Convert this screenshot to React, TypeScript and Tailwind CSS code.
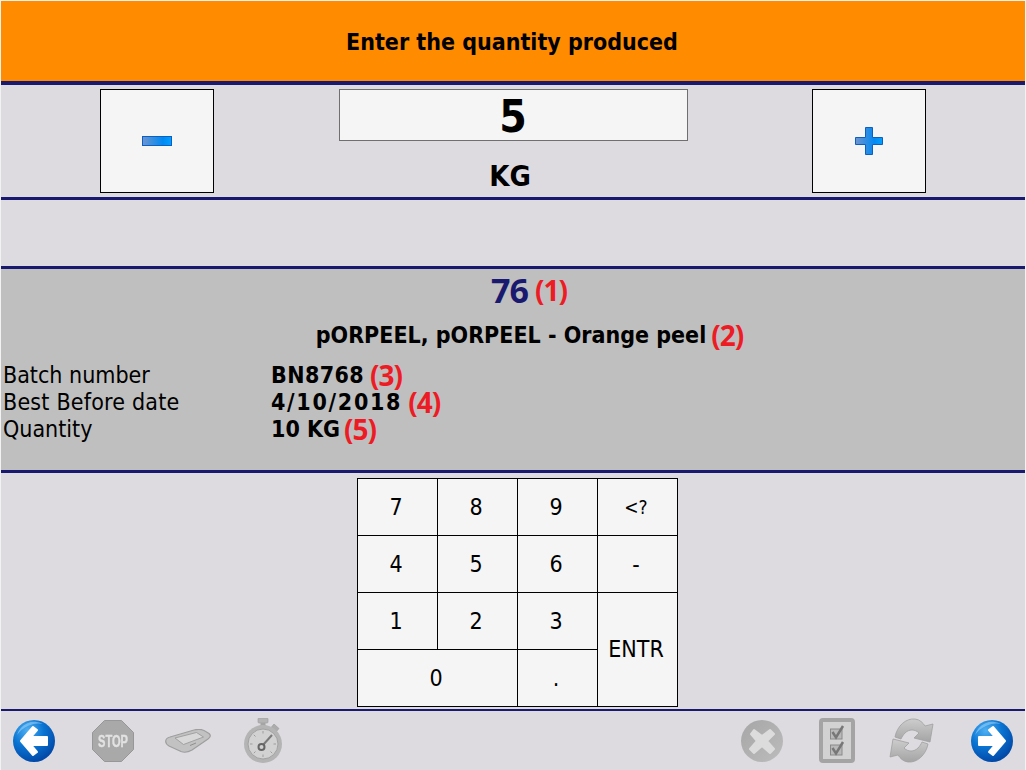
import type { ReactNode } from 'react';

const note = "font-['Open_Sans',sans-serif] font-bold text-[#ed1c24] text-[28px] tracking-[-1px] leading-[24px]";

function Mark({ n, className = 'ml-[6px]' }: { n: number; className?: string }) {
  return <span className={`${note} ${className}`}>({n})</span>;
}

function Key({ label, className = 'text-[23px]' }: { label: string; className?: string }) {
  return (
    <div className={`flex items-center justify-center bg-[#f5f5f5] pr-[2px] text-black ${className}`}>
      {label}
    </div>
  );
}

function InfoRow({ label, value, n, className = '', markClass = 'ml-[6px]', labelClass = '' }: { label: string; value: string; n: number; className?: string; markClass?: string; labelClass?: string }) {
  return (
    <div className="flex h-[27px] items-center">
      <div className={`w-[270px] pl-[2px] text-[23px] leading-[27px] ${labelClass}`}>{label}</div>
      <div className={`text-[23px] font-bold leading-[27px] ${className}`}>{value}</div>
      <Mark n={n} className={`-mt-[2px] ${markClass}`} />
    </div>
  );
}

function Defs() {
  return (
    <svg width="0" height="0" className="absolute">
      <defs>
        <radialGradient id="blueBall" cx="35%" cy="25%" r="85%">
          <stop offset="0%" stopColor="#4fb0f2" />
          <stop offset="45%" stopColor="#0a74d2" />
          <stop offset="100%" stopColor="#003f9e" />
        </radialGradient>
        <linearGradient id="greyBall" x1="0" y1="0" x2="1" y2="1">
          <stop offset="0%" stopColor="#a6a6a6" />
          <stop offset="100%" stopColor="#bcbcbc" />
        </linearGradient>
        <linearGradient id="greyFlat" x1="0" y1="0" x2="0" y2="1">
          <stop offset="0%" stopColor="#cdcdcd" />
          <stop offset="100%" stopColor="#a4a4a4" />
        </linearGradient>
        <linearGradient id="btnBlue" x1="0" y1="0" x2="1" y2="0">
          <stop offset="0%" stopColor="#6f94cf" />
          <stop offset="70%" stopColor="#0089f2" />
          <stop offset="100%" stopColor="#00a0ff" />
        </linearGradient>
      </defs>
    </svg>
  );
}

function BackIcon() {
  return (
    <svg width="42" height="42" viewBox="0 0 42 42">
      <circle cx="21" cy="21" r="21" fill="url(#blueBall)" />
      <path d="M4 15 A18 18 0 0 1 30 4 A26 26 0 0 0 4 15Z" fill="#9fd4f7" opacity="0.55" />
      <path d="M20 7 L8 21 L20 35 L24 32 L18 25 L34 25 L34 17 L18 17 L24 10Z" fill="#fff" stroke="#fff" strokeWidth="2" strokeLinejoin="round" />
    </svg>
  );
}

function ForwardIcon() {
  return (
    <svg width="42" height="42" viewBox="0 0 42 42">
      <circle cx="21" cy="21" r="21" fill="url(#blueBall)" />
      <path d="M4 15 A18 18 0 0 1 30 4 A26 26 0 0 0 4 15Z" fill="#9fd4f7" opacity="0.55" />
      <path d="M22 7 L34 21 L22 35 L18 32 L24 25 L8 25 L8 17 L24 17 L18 10Z" fill="#fff" stroke="#fff" strokeWidth="2" strokeLinejoin="round" />
    </svg>
  );
}

function StopIcon() {
  return (
    <svg width="42" height="42" viewBox="0 0 42 42" className="overflow-visible blur-[0.3px]">
      <path d="M12.5 0.5 H29.5 L41.5 12.5 V29.5 L29.5 41.5 H12.5 L0.5 29.5 V12.5Z" fill="#a9a9a9" stroke="#979797" />
      <text x="21" y="27" textAnchor="middle" fontFamily="Liberation Sans, sans-serif" fontWeight="700" fontSize="16" textLength="30" lengthAdjust="spacingAndGlyphs" fill="#e2e2e2" stroke="#e2e2e2" strokeWidth="0.4">STOP</text>
    </svg>
  );
}

function TabletIcon() {
  return (
    <svg width="46" height="24" viewBox="0 0 46 24" className="blur-[0.3px]">
      <path d="M0.7 12 Q1 9 5 8 L29 1 Q35 -0.5 39 1.5 L44 4.5 Q47 7 43 10 L27 21 Q21 24.5 16 22.5 L4 17 Q0.5 15 0.7 12Z" fill="#c2c2c2" stroke="#9e9e9e" strokeWidth="1.2" />
      <path d="M10 9 L31.5 3.5 L38.5 8 L18.5 15.5Z" fill="#d8d8d8" stroke="#959595" strokeWidth="0.8" />
      <path d="M25 16.5 L31 14" stroke="#8f8f8f" strokeWidth="1" />
    </svg>
  );
}

function WatchIcon() {
  return (
    <svg width="38" height="45" viewBox="0 0 38 45" className="blur-[0.3px]">
      <rect x="14" y="0" width="10" height="5" rx="1" fill="#b4b4b4" stroke="#9c9c9c" strokeWidth="0.6" />
      <rect x="16.5" y="5" width="5" height="4" fill="#a4a4a4" />
      <path d="M30 6 L35 10.5 L32 14 L27 9.5Z" fill="#acacac" stroke="#979797" strokeWidth="0.6" />
      <circle cx="19" cy="26" r="19" fill="#b4b4b4" />
      <circle cx="19" cy="26" r="15" fill="#d2d2d2" stroke="#a2a2a2" />
      <g stroke="#9d9d9d" strokeWidth="1">
        <path d="M19 13 V15.5" />
        <path d="M19 36.5 V39" />
        <path d="M6 26 H8.5" />
        <path d="M29.5 26 H32" />
        <path d="M9.8 16.8 L11.5 18.5" />
        <path d="M9.8 35.2 L11.5 33.5" />
        <path d="M28.2 35.2 L26.5 33.5" />
      </g>
      <path d="M19 27 L28 17" stroke="#7a7a7a" strokeWidth="2" />
      <circle cx="17.5" cy="29" r="3" fill="#d2d2d2" stroke="#666" strokeWidth="2" />
    </svg>
  );
}

function CancelIcon() {
  return (
    <svg width="42" height="42" viewBox="0 0 42 42" className="blur-[0.3px]">
      <circle cx="21" cy="21" r="21" fill="url(#greyBall)" />
      <path d="M13 10 L21 16 L29 10 L33 14 L26 21 L33 29 L29 33 L21 26 L13 33 L9 29 L16 21 L10 14Z" fill="#dcdcdc" stroke="#dcdcdc" strokeWidth="2" strokeLinejoin="round" />
    </svg>
  );
}

function ChecklistIcon() {
  return (
    <svg width="36" height="45" viewBox="0 0 36 45" className="blur-[0.3px]">
      <rect x="2" y="2" width="32" height="41" rx="2" fill="#d2d2d2" stroke="#a4a4a4" strokeWidth="4" />
      <rect x="11.5" y="11" width="11.5" height="10" fill="#b9b9b9" stroke="#8a8a8a" />
      <rect x="11.5" y="27" width="11.5" height="10" fill="#b9b9b9" stroke="#8a8a8a" />
      <path d="M13.5 14 L17 19.5 L24 8" fill="none" stroke="#777" strokeWidth="2.5" />
      <path d="M13.5 30 L17 35.5 L24 24" fill="none" stroke="#777" strokeWidth="2.5" />
    </svg>
  );
}

function RefreshIcon() {
  return (
    <svg width="45" height="45" viewBox="0 0 45 45" className="blur-[0.3px]">
      <path d="M6 19 C8 8 17 0 26 1 C31 1.5 34 5 36 8 L44 6 L41 24 L25 20 L30 15 C26 11 20 11 16 15 C14 17 13 19 12 21Z" fill="url(#greyFlat)" stroke="#a0a0a0" strokeWidth="0.8" strokeLinejoin="round" />
      <path d="M39 26 C37 37 28 45 19 44 C14 43.5 11 40 9 37 L1 39 L4 21 L20 25 L15 30 C19 34 25 34 29 30 C31 28 32 26 33 24Z" fill="url(#greyFlat)" stroke="#a0a0a0" strokeWidth="0.8" strokeLinejoin="round" />
    </svg>
  );
}

function Rule({ className = 'h-[3px]' }: { className?: string }) {
  return <div className={`shrink-0 bg-[#191970] ${className}`} />;
}

function SquareButton({ children }: { children: ReactNode }) {
  return (
    <div className="flex h-[104px] w-[114px] items-center justify-center border border-black bg-[#f5f5f5]">
      {children}
    </div>
  );
}

export default function App() {
  return (
    <div className="h-[770px] w-[1026px] overflow-hidden bg-[#f2f2f2] pt-px pl-px pr-px font-['DejaVu_Sans_Condensed','DejaVu_Sans',sans-serif] text-black">
      <Defs />
      <div className="flex h-full flex-col bg-[#dddbe0]">
        <header className="flex h-[80px] shrink-0 items-center justify-center bg-[#ff8c00] pt-[2px] pr-[2px] text-[23px] font-bold">
          Enter the quantity produced
        </header>
        <Rule className="h-[4px]" />

        <section className="flex h-[112px] shrink-0 justify-between px-[99px] pt-[4px]">
          <SquareButton>
            <svg width="30" height="10" viewBox="0 0 30 10">
              <rect x="0.5" y="0.5" width="29" height="9" fill="url(#btnBlue)" stroke="#0c5fc0" />
            </svg>
          </SquareButton>
          <div className="flex w-[349px] flex-col items-center">
            <div className="flex h-[52px] w-full items-center justify-center border border-[#6f6f6f] bg-[#f5f5f5] pt-[3px] text-[44px] font-bold">
              5
            </div>
            <div className="mt-[17px] pr-[6px] text-[29px] font-bold leading-[36px]">KG</div>
          </div>
          <SquareButton>
            <svg width="28" height="28" viewBox="0 0 28 28">
              <path d="M10.5 0.5 H17.5 V10.5 H27.5 V17.5 H17.5 V27.5 H10.5 V17.5 H0.5 V10.5 H10.5Z" fill="url(#btnBlue)" stroke="#0c5fc0" />
            </svg>
          </SquareButton>
        </section>
        <Rule />

        <div className="h-[66px] shrink-0" />
        <Rule />

        <section className="flex h-[201px] shrink-0 flex-col bg-[#bfbfbf]">
          <div className="flex h-[42px] items-center justify-center pl-[32px]">
            <span className="font-['Open_Sans',sans-serif] text-[34px] font-bold leading-none tracking-[-1px] text-[#191970]">76</span>
            <Mark n={1} className="ml-[7px]" />
          </div>
          <div className="flex h-[46px] items-center justify-center pt-[2px] pl-[33px] text-[23px] font-bold">
            pORPEEL, pORPEEL - Orange peel
            <Mark n={2} className="ml-[5px]" />
          </div>
          <div className="mt-[5px]">
            <InfoRow label="Batch number" value="BN8768" n={3} className="tracking-[0.4px]" />
            <InfoRow label="Best Before date" value="4/10/2018" n={4} className="tracking-[1.7px]" labelClass="tracking-[0.2px]" />
            <InfoRow label="Quantity" value="10 KG" n={5} markClass="ml-[4px]" />
          </div>
        </section>
        <Rule />

        <section className="flex h-[236px] shrink-0 justify-center pt-[5px] pl-[8px]">
          <div className="grid h-[229px] w-[321px] grid-cols-[79px_79px_79px_79px] grid-rows-[56px_56px_56px_56px] gap-px bg-black p-px">
            <Key label="7" />
            <Key label="8" />
            <Key label="9" />
            <Key label="<?" className="text-[19px]" />
            <Key label="4" />
            <Key label="5" />
            <Key label="6" />
            <Key label="-" />
            <Key label="1" />
            <Key label="2" />
            <Key label="3" />
            <Key label="ENTR" className="row-span-2 text-[23px]" />
            <Key label="0" className="col-span-2 text-[23px]" />
            <Key label="." />
          </div>
        </section>
        <Rule className="h-[2px]" />

        <footer className="flex flex-1 items-center justify-between px-[12px]">
          <div className="flex items-center">
            <BackIcon />
            <div className="ml-[37px]"><StopIcon /></div>
            <div className="ml-[31px]"><TabletIcon /></div>
            <div className="ml-[33px]"><WatchIcon /></div>
          </div>
          <div className="flex items-center">
            <CancelIcon />
            <div className="ml-[36px]"><ChecklistIcon /></div>
            <div className="ml-[34px]"><RefreshIcon /></div>
            <div className="ml-[37px]"><ForwardIcon /></div>
          </div>
        </footer>
      </div>
    </div>
  );
}
